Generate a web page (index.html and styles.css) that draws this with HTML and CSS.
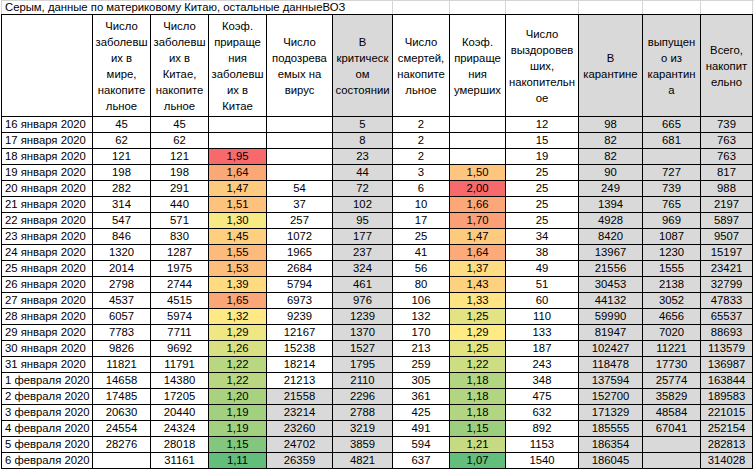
FILE: index.html
```html
<!DOCTYPE html>
<html lang="ru">
<head>
<meta charset="utf-8">
<title>Коронавирус — данные</title>
<link rel="stylesheet" href="styles.css">
</head>
<body>
<div class="sheet">
  <div class="title-row">
    <div class="tcell title">Серым, данные по материковому Китаю, остальные данныеВОЗ</div>
    <div class="tcell"></div>
    <div class="tcell"></div>
    <div class="tcell"></div>
    <div class="tcell"></div>
    <div class="tcell"></div>
    <div class="tcell"></div>
  </div>
  <div class="grid">
    <div class="h"></div>
    <div class="h">Число<br>заболевш<br>их в<br>мире,<br>накопите<br>льное</div>
    <div class="h">Число<br>заболевш<br>их в<br>Китае,<br>накопите<br>льное</div>
    <div class="h">Коэф.<br>прираще<br>ния<br>заболевш<br>их в<br>Китае</div>
    <div class="h">Число<br>подозрева<br>емых на<br>вирус</div>
    <div class="h g">В<br>критическ<br>ом<br>состоянии</div>
    <div class="h">Число<br>смертей,<br>накопите<br>льное</div>
    <div class="h">Коэф.<br>прираще<br>ния<br>умерших</div>
    <div class="h">Число<br>выздоровев<br>ших,<br>накопительн<br>ое</div>
    <div class="h g">В<br>карантине</div>
    <div class="h g">выпущен<br>о из<br>карантин<br>а</div>
    <div class="h g">Всего,<br>накопит<br>ельно</div>

    <div class="d">16 января 2020</div><div class="c">45</div><div class="c">45</div><div class="c"></div><div class="c"></div><div class="c g">5</div><div class="c">2</div><div class="c"></div><div class="c">12</div><div class="c g">98</div><div class="c g">665</div><div class="c g">739</div>

    <div class="d">17 января 2020</div><div class="c">62</div><div class="c">62</div><div class="c"></div><div class="c"></div><div class="c g">8</div><div class="c">2</div><div class="c"></div><div class="c">15</div><div class="c g">82</div><div class="c g">681</div><div class="c g">763</div>

    <div class="d">18 января 2020</div><div class="c">121</div><div class="c">121</div><div class="c" style="background:rgb(248,105,107)">1,95</div><div class="c"></div><div class="c g">23</div><div class="c">2</div><div class="c"></div><div class="c">19</div><div class="c g">82</div><div class="c g"></div><div class="c g">763</div>

    <div class="d">19 января 2020</div><div class="c">198</div><div class="c">198</div><div class="c" style="background:rgb(251,168,119)">1,64</div><div class="c"></div><div class="c g">44</div><div class="c">3</div><div class="c" style="background:rgb(253,197,125)">1,50</div><div class="c">25</div><div class="c g">90</div><div class="c g">727</div><div class="c g">817</div>

    <div class="d">20 января 2020</div><div class="c">282</div><div class="c">291</div><div class="c" style="background:rgb(253,202,126)">1,47</div><div class="c">54</div><div class="c g">72</div><div class="c">6</div><div class="c" style="background:rgb(248,105,107)">2,00</div><div class="c">25</div><div class="c g">249</div><div class="c g">739</div><div class="c g">988</div>

    <div class="d">21 января 2020</div><div class="c">314</div><div class="c">440</div><div class="c" style="background:rgb(253,194,124)">1,51</div><div class="c">37</div><div class="c g">102</div><div class="c">10</div><div class="c" style="background:rgb(251,167,119)">1,66</div><div class="c">25</div><div class="c g">1394</div><div class="c g">765</div><div class="c g">2197</div>

    <div class="d">22 января 2020</div><div class="c">547</div><div class="c">571</div><div class="c" style="background:rgb(247,233,132)">1,30</div><div class="c">257</div><div class="c g">95</div><div class="c">17</div><div class="c" style="background:rgb(251,160,118)">1,70</div><div class="c">25</div><div class="c g">4928</div><div class="c g">969</div><div class="c g">5897</div>

    <div class="d">23 января 2020</div><div class="c">846</div><div class="c">830</div><div class="c" style="background:rgb(253,207,127)">1,45</div><div class="c">1072</div><div class="c g">177</div><div class="c">25</div><div class="c" style="background:rgb(253,202,126)">1,47</div><div class="c">34</div><div class="c g">8420</div><div class="c g">1087</div><div class="c g">9507</div>

    <div class="d">24 января 2020</div><div class="c">1320</div><div class="c">1287</div><div class="c" style="background:rgb(252,186,123)">1,55</div><div class="c">1965</div><div class="c g">237</div><div class="c">41</div><div class="c" style="background:rgb(252,171,120)">1,64</div><div class="c">38</div><div class="c g">13967</div><div class="c g">1230</div><div class="c g">15197</div>

    <div class="d">25 января 2020</div><div class="c">2014</div><div class="c">1975</div><div class="c" style="background:rgb(253,190,123)">1,53</div><div class="c">2684</div><div class="c g">324</div><div class="c">56</div><div class="c" style="background:rgb(254,220,129)">1,37</div><div class="c">49</div><div class="c g">21556</div><div class="c g">1555</div><div class="c g">23421</div>

    <div class="d">26 января 2020</div><div class="c">2798</div><div class="c">2744</div><div class="c" style="background:rgb(254,219,129)">1,39</div><div class="c">5794</div><div class="c g">461</div><div class="c">80</div><div class="c" style="background:rgb(254,209,127)">1,43</div><div class="c">51</div><div class="c g">30453</div><div class="c g">2138</div><div class="c g">32799</div>

    <div class="d">27 января 2020</div><div class="c">4537</div><div class="c">4515</div><div class="c" style="background:rgb(251,166,119)">1,65</div><div class="c">6973</div><div class="c g">976</div><div class="c">106</div><div class="c" style="background:rgb(255,228,131)">1,33</div><div class="c">60</div><div class="c g">44132</div><div class="c g">3052</div><div class="c g">47833</div>

    <div class="d">28 января 2020</div><div class="c">6057</div><div class="c">5974</div><div class="c" style="background:rgb(255,233,132)">1,32</div><div class="c">9239</div><div class="c g">1239</div><div class="c">132</div><div class="c" style="background:rgb(227,227,130)">1,25</div><div class="c">110</div><div class="c g">59990</div><div class="c g">4656</div><div class="c g">65537</div>

    <div class="d">29 января 2020</div><div class="c">7783</div><div class="c">7711</div><div class="c" style="background:rgb(239,231,131)">1,29</div><div class="c">12167</div><div class="c g">1370</div><div class="c">170</div><div class="c" style="background:rgb(255,235,132)">1,29</div><div class="c">133</div><div class="c g">81947</div><div class="c g">7020</div><div class="c g">88693</div>

    <div class="d">30 января 2020</div><div class="c">9826</div><div class="c">9692</div><div class="c" style="background:rgb(216,224,130)">1,26</div><div class="c">15238</div><div class="c g">1527</div><div class="c">213</div><div class="c" style="background:rgb(227,227,130)">1,25</div><div class="c">187</div><div class="c g">102427</div><div class="c g">11221</div><div class="c g">113579</div>

    <div class="d">31 января 2020</div><div class="c">11821</div><div class="c">11791</div><div class="c" style="background:rgb(185,215,128)">1,22</div><div class="c">18214</div><div class="c g">1795</div><div class="c">259</div><div class="c" style="background:rgb(205,221,129)">1,22</div><div class="c">243</div><div class="c g">118478</div><div class="c g">17730</div><div class="c g">136987</div>

    <div class="d">1 февраля 2020</div><div class="c">14658</div><div class="c">14380</div><div class="c" style="background:rgb(185,215,128)">1,22</div><div class="c">21213</div><div class="c g">2110</div><div class="c">305</div><div class="c" style="background:rgb(177,213,128)">1,18</div><div class="c">348</div><div class="c g">137594</div><div class="c g">25774</div><div class="c g">163844</div>

    <div class="d">2 февраля 2020</div><div class="c">17485</div><div class="c">17205</div><div class="c" style="background:rgb(169,210,127)">1,20</div><div class="c g">21558</div><div class="c g">2296</div><div class="c">361</div><div class="c" style="background:rgb(177,213,128)">1,18</div><div class="c">475</div><div class="c g">152700</div><div class="c g">35829</div><div class="c g">189583</div>

    <div class="d">3 февраля 2020</div><div class="c">20630</div><div class="c">20440</div><div class="c" style="background:rgb(161,208,127)">1,19</div><div class="c g">23214</div><div class="c g">2788</div><div class="c">425</div><div class="c" style="background:rgb(177,213,128)">1,18</div><div class="c">632</div><div class="c g">171329</div><div class="c g">48584</div><div class="c g">221015</div>

    <div class="d">4 февраля 2020</div><div class="c">24554</div><div class="c">24324</div><div class="c" style="background:rgb(161,208,127)">1,19</div><div class="c g">23260</div><div class="c g">3219</div><div class="c">491</div><div class="c" style="background:rgb(156,206,126)">1,15</div><div class="c">892</div><div class="c g">185555</div><div class="c g">67041</div><div class="c g">252154</div>

    <div class="d">5 февраля 2020</div><div class="c">28276</div><div class="c">28018</div><div class="c" style="background:rgb(130,199,125)">1,15</div><div class="c g">24702</div><div class="c g">3859</div><div class="c">594</div><div class="c" style="background:rgb(198,219,129)">1,21</div><div class="c">1153</div><div class="c g">186354</div><div class="c g"></div><div class="c g">282813</div>

    <div class="d">6 февраля 2020</div><div class="c"></div><div class="c">31161</div><div class="c" style="background:rgb(99,190,123)">1,11</div><div class="c g">26359</div><div class="c g">4821</div><div class="c">637</div><div class="c" style="background:rgb(99,190,123)">1,07</div><div class="c">1540</div><div class="c g">186045</div><div class="c g"></div><div class="c g">314028</div>
  </div>
</div>
</body>
</html>
```

FILE: styles.css
```css
html, body {
  margin: 0;
  padding: 0;
  background: #ffffff;
}

body {
  font-family: "Liberation Sans", Arial, sans-serif;
  font-size: 11.3px;
  color: #000000;
}

.sheet {
  margin-left: 1px;
  width: 753px;
}

.title-row {
  display: grid;
  grid-template-columns: 391px 57px 56px 73px 64px 58px 52px;
  border-top: 1px solid #d4d4d4;
  border-left: 1px solid #d4d4d4;
  height: 14px;
  box-sizing: border-box;
}

.tcell {
  border-right: 1px solid #d4d4d4;
  box-sizing: border-box;
  height: 13px;
}

.title {
  padding-left: 3px;
  line-height: 13px;
  white-space: nowrap;
}

.grid {
  display: grid;
  grid-template-columns: 91px 58px 58px 58px 66px 60px 57px 56px 73px 64px 58px 52px;
  grid-template-rows: 102px;
  grid-auto-rows: 16px;
  border-top: 1px solid #000000;
  border-left: 1px solid #000000;
  width: 752px;
  box-sizing: border-box;
}

.grid > div {
  border-right: 1px solid #000000;
  border-bottom: 1px solid #000000;
  box-sizing: border-box;
  white-space: nowrap;
  overflow: hidden;
}

.h {
  display: flex;
  align-items: center;
  justify-content: center;
  text-align: center;
  line-height: 16px;
}

.c {
  text-align: center;
  line-height: 15px;
}

.d {
  text-align: left;
  padding-left: 3px;
  line-height: 15px;
}

.g {
  background: #d9d9d9;
}
```
